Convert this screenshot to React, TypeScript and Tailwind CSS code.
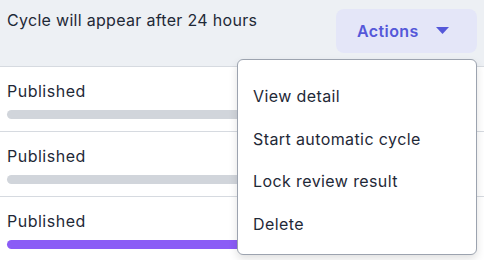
const rows = [
  { label: "Published", active: false },
  { label: "Published", active: false },
  { label: "Published", active: true },
];

const menuItems = ["View detail", "Start automatic cycle", "Lock review result", "Delete"];

export default function App() {
  return (
    <div
      className="relative w-[484px] h-[260px] overflow-hidden bg-white text-[#1f2937] tracking-[0.4px]"
      style={{ fontFamily: "Inter, 'Noto Sans', sans-serif" }}
    >
      {/* Header */}
      <div className="flex h-[67px] justify-between border-b border-[#d6dae0] bg-[#edf0f4]">
        <p className="pl-[7px] pt-[9px] text-[16px] leading-[22px] tracking-[0.3px]">
          Cycle will appear after 24 hours
        </p>
        <button className="mr-[7px] mt-[9px] flex h-[44px] w-[141px] items-center gap-[17px] rounded-lg bg-[#e4e6f8] pl-[21px] text-[16px] font-semibold text-[#5558d9]">
          Actions
          <svg width="13" height="8" viewBox="0 0 13 8">
            <path d="M0 0 H13 L6.5 7 Z" fill="#5558d9" />
          </svg>
        </button>
      </div>

      {/* Rows */}
      {rows.map((r, i) => (
        <div key={i} className="h-[65px] border-b border-[#d6dae0] px-[7px] pt-[13px]">
          <p className="text-[16px] leading-[22px] tracking-[0.5px]">{r.label}</p>
          <div
            className={`mt-[8px] h-[9px] rounded-full ${r.active ? "bg-[#8b5cf6]" : "bg-[#d1d5db]"}`}
          />
        </div>
      ))}

      {/* Dropdown menu */}
      <div className="absolute left-[237px] top-[59px] w-[240px] h-[196px] rounded-md border border-[#9ca3af] bg-white pt-[15px] shadow-[0_4px_8px_rgba(0,0,0,0.12)]">
        {menuItems.map((m) => (
          <div key={m} className="flex h-[42.5px] items-center pl-[15px] text-[16px] text-[#1f2937]">
            {m}
          </div>
        ))}
      </div>
    </div>
  );
}
